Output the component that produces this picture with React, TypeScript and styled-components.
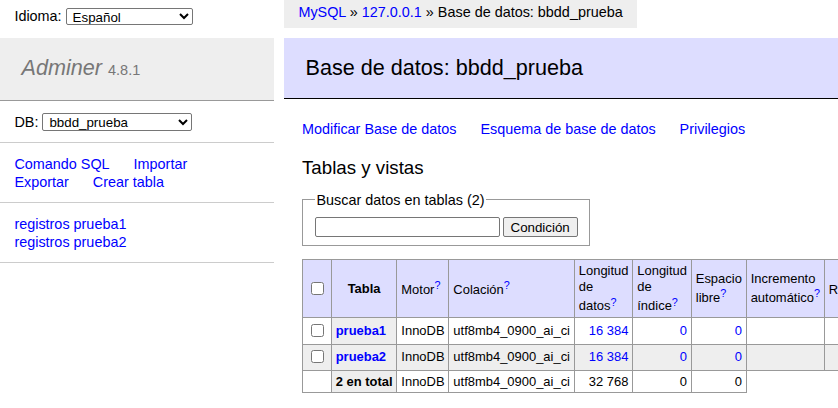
import React from "react";
import styled, { createGlobalStyle } from "styled-components";

const Global = createGlobalStyle`
  html, body {
    margin: 0;
    padding: 0;
    overflow: hidden;
    background: #fff;
  }
  body {
    color: #000;
    font: 14.4px/1.25 "Liberation Sans", Arial, Helvetica, sans-serif;
  }
`;

const Page = styled.div`
  display: grid;
  grid-template-columns: 274px 554px;
  grid-template-rows: 38px auto;
  column-gap: 10px;
  align-items: start;
`;

const Link = styled.a<{ $bold?: boolean }>`
  color: #00f;
  text-decoration: none;
  font-weight: ${(p) => (p.$bold ? "bold" : "inherit")};
`;

const NavLink = styled(Link)`
  white-space: nowrap;
  margin-right: 20px;
`;

const Lang = styled.form`
  display: flex;
  align-items: center;
  gap: 4px;
  height: 32px;
  margin: 0;
  padding: 0 14.4px;
`;

const Select = styled.select<{ $w: number; $h: number }>`
  width: ${(p) => p.$w}px;
  height: ${(p) => p.$h}px;
  margin: 0;
  padding: 0 2px;
  font: 13.33px "Liberation Sans", Arial, sans-serif;
  color: #000;
  background: #fff;
  border: 1px solid #767676;
  border-radius: 2px;
`;

const Breadcrumb = styled.p`
  justify-self: start;
  margin: 0;
  height: 28px;
  line-height: 24px;
  padding: 0 14.4px;
  background: #eee;
  white-space: nowrap;
`;

const Menu = styled.div`
  display: flex;
  flex-direction: column;
`;

const Logo = styled.h1`
  margin: 0;
  padding: 17px 21.6px;
  font-size: 21.6px;
  line-height: 26px;
  font-weight: normal;
  color: #777;
  background: #eee;
  border-bottom: 1px solid #999;
`;

const LogoLink = styled.a`
  color: #777;
  font-style: italic;
  text-decoration: none;
`;

const Version = styled.span`
  color: #777;
  font-size: 14.5px;
`;

const DbForm = styled.form`
  display: flex;
  align-items: center;
  gap: 4px;
  margin: 0;
  padding: 11.5px 14.4px;
  border-bottom: 1px solid #ccc;
`;

const MenuLinks = styled.p`
  margin: 0;
  padding: 11.5px 14.4px;
  line-height: 18px;
  border-bottom: 1px solid #ccc;
`;

const TableList = styled.ul`
  list-style: none;
  margin: 0;
  padding: 11.5px 14.4px;
  line-height: 18px;
  border-bottom: 1px solid #ccc;
`;

const Content = styled.div`
  display: flex;
  flex-direction: column;
  align-items: flex-start;
`;

const Title = styled.h2`
  align-self: stretch;
  margin: 0 0 21px;
  padding: 17px 21.6px;
  font-size: 21.6px;
  line-height: 26px;
  font-weight: normal;
  color: #000;
  background: #ddf;
  border-bottom: 1px solid #000;
`;

const Body = styled.div`
  width: 516px;
  padding: 0 20px 20px 18px;
`;

const Links = styled.p`
  margin: 0;
  line-height: 18px;
`;

const SubTitle = styled.h3`
  margin: 18px 0 0;
  font-size: 18.72px;
  line-height: 23.4px;
  font-weight: normal;
`;

const Fieldset = styled.fieldset`
  display: inline-block;
  margin: 11.5px 0 0;
  padding: 8.2px 11.5px;
  border: 1px solid #999;
`;

const Legend = styled.legend`
  padding: 0 2px;
  line-height: 18px;
`;

const SearchRow = styled.div`
  display: flex;
  align-items: center;
  gap: 3px;
`;

const SearchInput = styled.input`
  box-sizing: border-box;
  width: 185px;
  height: 20px;
  margin: 0;
  padding: 1px 2px;
  font: 13.33px "Liberation Sans", Arial, sans-serif;
  border: 1px solid #767676;
  border-radius: 2px;
`;

const Button = styled.button`
  box-sizing: border-box;
  height: 20px;
  margin: 0;
  padding: 0 7px;
  font: 13.33px "Liberation Sans", Arial, sans-serif;
  color: #000;
  background: #efefef;
  border: 1px solid #767676;
  border-radius: 2px;
`;

const Table = styled.table`
  margin: 13px 0 0;
  border-collapse: collapse;
  font-size: 12.96px;
  line-height: 1.25;
`;

const HeadCell = styled.td`
  border: 1px solid #999;
  padding: 2.6px 3.9px;
  background: #ddf;
  text-align: left;
  white-space: normal;
`;

const HeadTh = styled.th`
  border: 1px solid #999;
  padding: 2.6px 6.5px;
  background: #ddf;
  text-align: center;
  font-weight: bold;
`;

const Row = styled.tr<{ $even?: boolean }>`
  background: ${(p) => (p.$even ? "#eee" : "transparent")};
`;

const Cell = styled.td<{ $num?: boolean }>`
  border: 1px solid #999;
  padding: 2.6px 3.9px;
  white-space: pre;
  text-align: ${(p) => (p.$num ? "right" : "left")};
`;

const RowHead = styled.th`
  border: 1px solid #999;
  padding: 2.6px 3.9px;
  background: #eee;
  text-align: left;
  white-space: pre;
`;

const Check = styled.input.attrs({ type: "checkbox" })`
  margin: 3px 3px 3px 4px;
`;

const Sup = styled.sup`
  color: #00f;
`;

const Help = () => (
  <Link href="#">
    <Sup>?</Sup>
  </Link>
);

const rows = [
  { name: "prueba1", data: "16\u00a0384", index: "0", free: "0", rows: "2" },
  { name: "prueba2", data: "16\u00a0384", index: "0", free: "0", rows: "2" },
];

export default function App() {
  return (
    <>
      <Global />
      <Page>
        <Lang>
          <span>Idioma:</span>
          <Select $w={127} $h={17} defaultValue="es">
            <option value="es">Español</option>
            <option value="en">English</option>
          </Select>
        </Lang>
        <Breadcrumb>
          <Link href="#">MySQL</Link> » <Link href="#">127.0.0.1</Link> » Base de datos: bbdd_prueba
        </Breadcrumb>

        <Menu>
          <Logo>
            <LogoLink href="#">Adminer</LogoLink> <Version>4.8.1</Version>
          </Logo>
          <DbForm>
            <span>DB:</span>
            <Select $w={150} $h={18} defaultValue="bbdd_prueba">
              <option value="bbdd_prueba">bbdd_prueba</option>
            </Select>
          </DbForm>
          <MenuLinks>
            <NavLink href="#">Comando SQL</NavLink> <NavLink href="#">Importar</NavLink>{" "}
            <NavLink href="#">Exportar</NavLink> <NavLink href="#">Crear tabla</NavLink>
          </MenuLinks>
          <TableList>
            <li>
              <Link href="#">registros</Link> <Link href="#">prueba1</Link>
            </li>
            <li>
              <Link href="#">registros</Link> <Link href="#">prueba2</Link>
            </li>
          </TableList>
        </Menu>

        <Content>
          <Title>Base de datos: bbdd_prueba</Title>
          <Body>
            <Links>
              <NavLink href="#">Modificar Base de datos</NavLink>{" "}
              <NavLink href="#">Esquema de base de datos</NavLink>{" "}
              <NavLink href="#">Privilegios</NavLink>
            </Links>
            <SubTitle>Tablas y vistas</SubTitle>
            <Fieldset>
              <Legend>Buscar datos en tablas (2)</Legend>
              <SearchRow>
                <SearchInput type="search" />
                <Button type="button">Condición</Button>
              </SearchRow>
            </Fieldset>
            <Table>
              <thead>
                <tr>
                  <HeadCell>
                    <Check />
                  </HeadCell>
                  <HeadTh>Tabla</HeadTh>
                  <HeadCell>
                    Motor<Help />
                  </HeadCell>
                  <HeadCell>
                    Colación<Help />
                  </HeadCell>
                  <HeadCell>
                    Longitud de datos<Help />
                  </HeadCell>
                  <HeadCell>
                    Longitud de índice<Help />
                  </HeadCell>
                  <HeadCell>
                    Espacio libre<Help />
                  </HeadCell>
                  <HeadCell>
                    Incremento automático<Help />
                  </HeadCell>
                  <HeadCell>
                    Registros<Help />
                  </HeadCell>
                  <HeadCell>
                    Comentario<Help />
                  </HeadCell>
                </tr>
              </thead>
              <tbody>
                {rows.map((r, i) => (
                  <Row key={r.name} $even={i % 2 === 1}>
                    <Cell>
                      <Check />
                    </Cell>
                    <RowHead>
                      <Link href="#" $bold>
                        {r.name}
                      </Link>
                    </RowHead>
                    <Cell>InnoDB</Cell>
                    <Cell>utf8mb4_0900_ai_ci</Cell>
                    <Cell $num>
                      <Link href="#">{r.data}</Link>
                    </Cell>
                    <Cell $num>
                      <Link href="#">{r.index}</Link>
                    </Cell>
                    <Cell $num>
                      <Link href="#">{r.free}</Link>
                    </Cell>
                    <Cell $num></Cell>
                    <Cell $num>
                      <Link href="#">{r.rows}</Link>
                    </Cell>
                    <Cell></Cell>
                  </Row>
                ))}
                <Row>
                  <Cell></Cell>
                  <RowHead>2 en total</RowHead>
                  <Cell>InnoDB</Cell>
                  <Cell>utf8mb4_0900_ai_ci</Cell>
                  <Cell $num>32{"\u00a0"}768</Cell>
                  <Cell $num>0</Cell>
                  <Cell $num>0</Cell>
                </Row>
              </tbody>
            </Table>
          </Body>
        </Content>
      </Page>
    </>
  );
}
